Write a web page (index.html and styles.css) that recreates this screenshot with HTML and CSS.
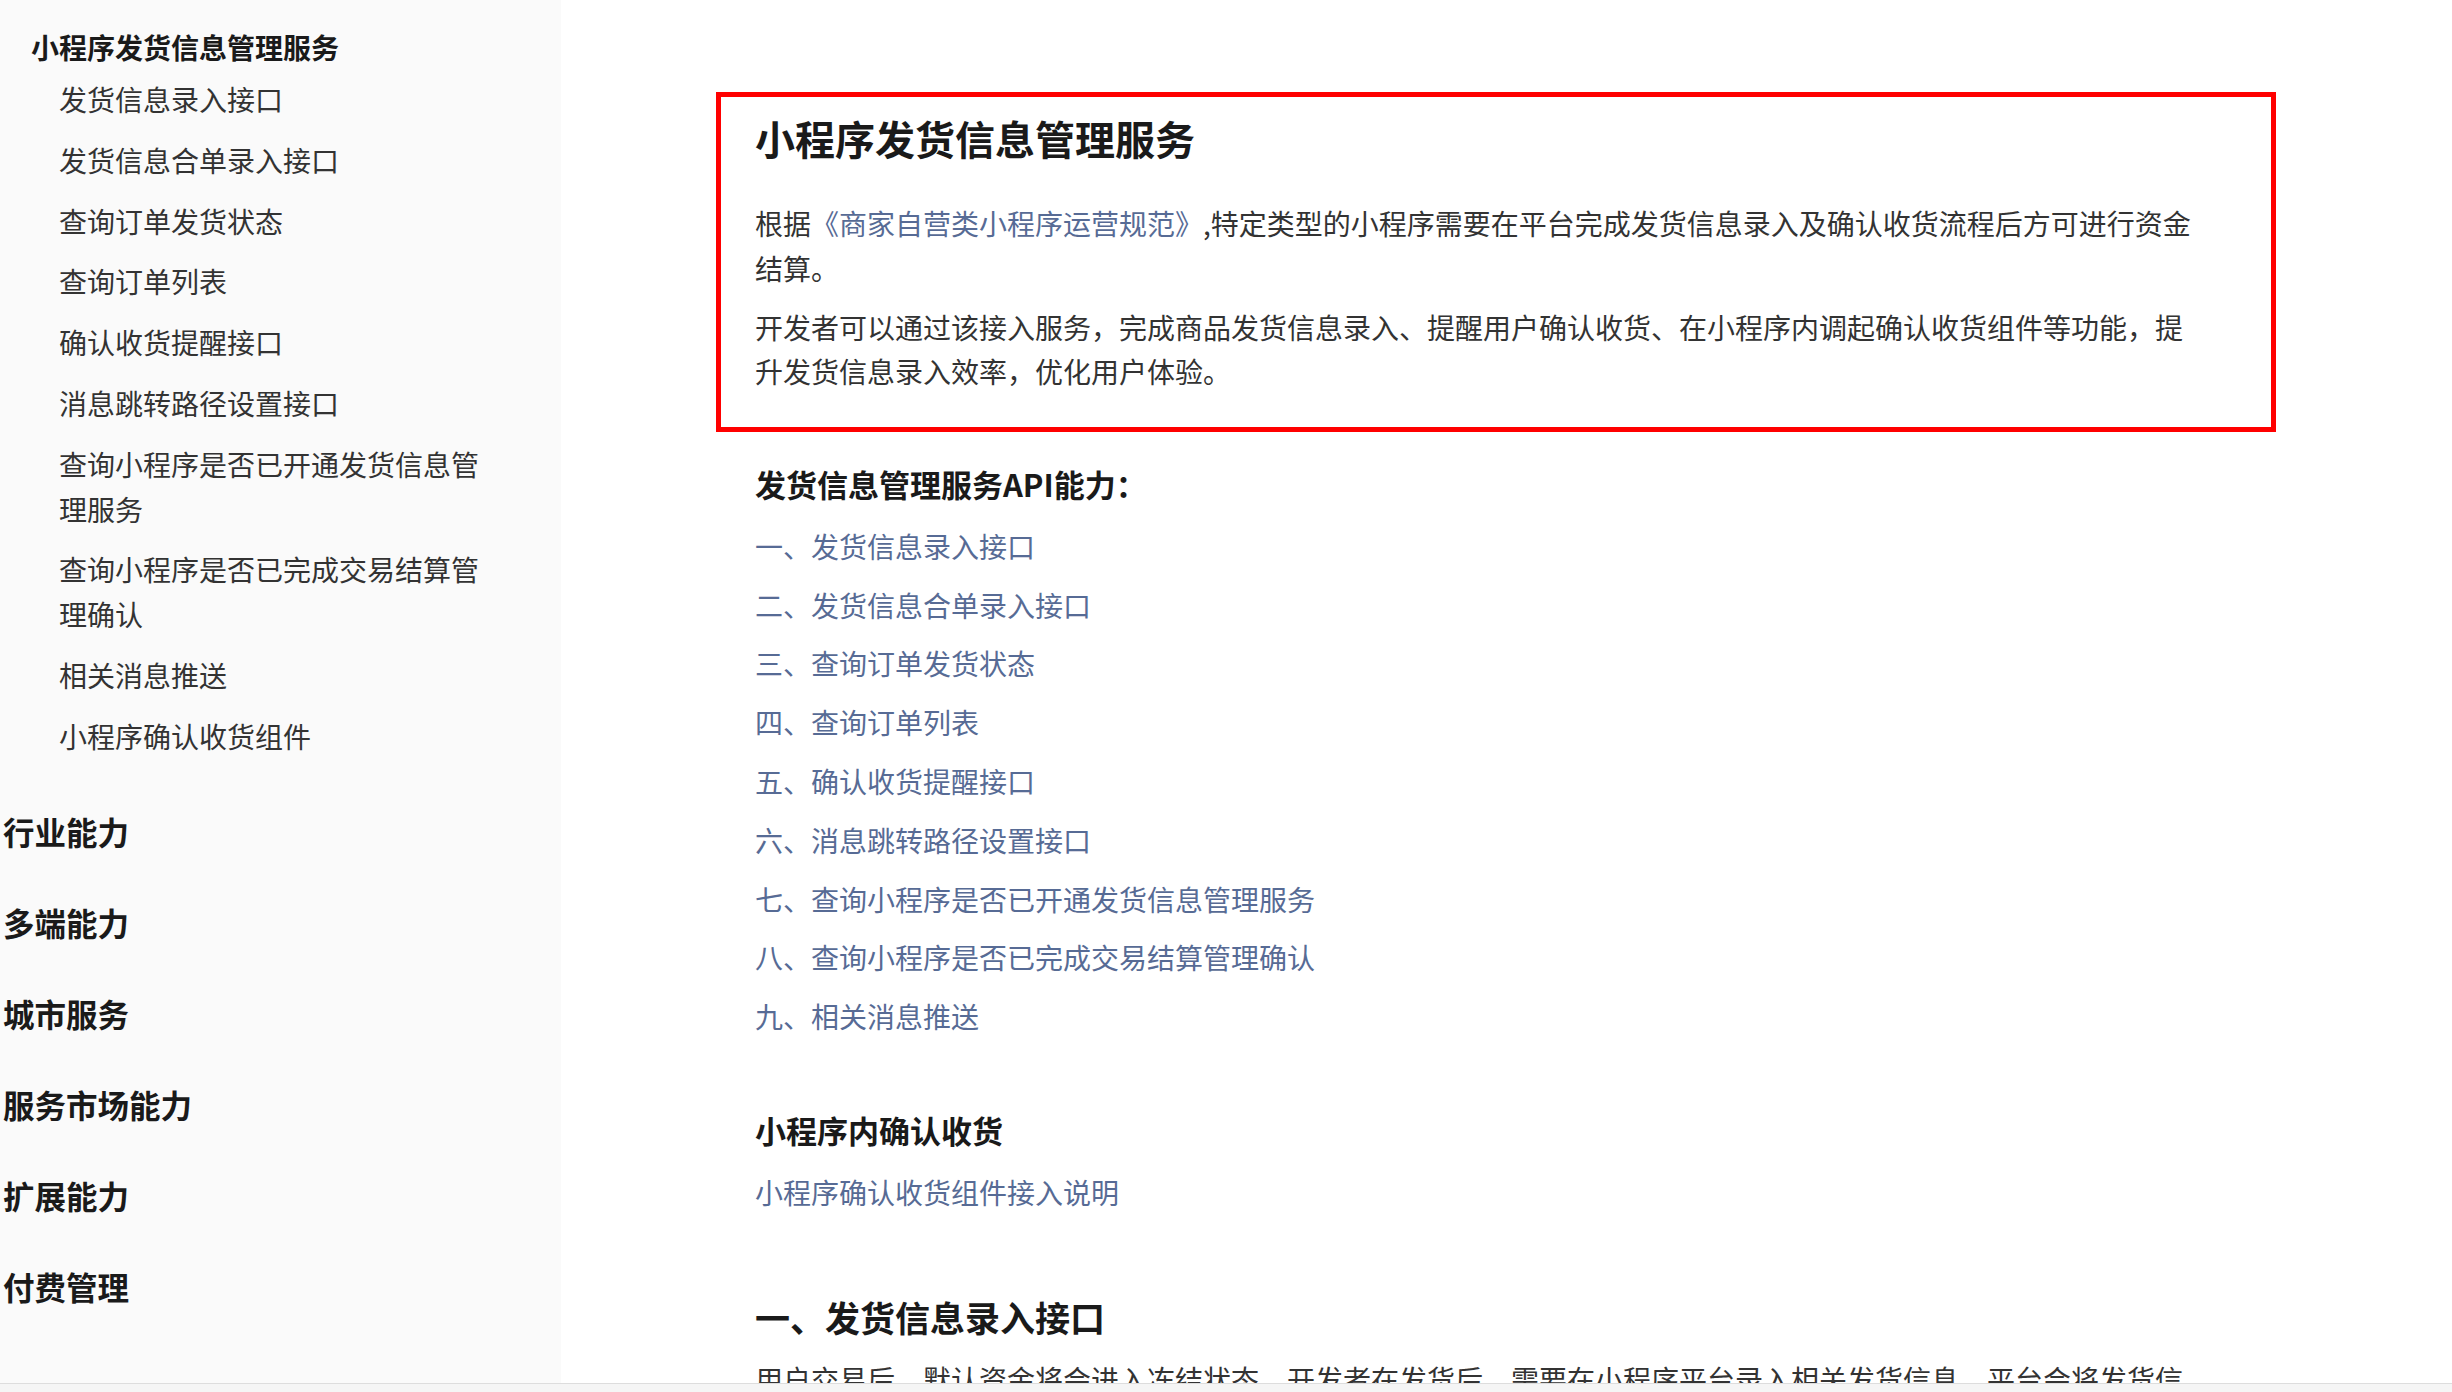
FILE: index.html
```html
<!DOCTYPE html>
<html>
<head>
    <meta charset="utf-8">
    <title>小程序发货信息管理服务</title>
    <link rel="stylesheet" href="styles.css">
</head>
<body>
    <div class="page">
        <div class="layout">
            <div class="sidebar">
                <div class="nav-title">小程序发货信息管理服务</div>
                <ul class="nav-list">
                    <li>发货信息录入接口</li>
                    <li>发货信息合单录入接口</li>
                    <li>查询订单发货状态</li>
                    <li>查询订单列表</li>
                    <li>确认收货提醒接口</li>
                    <li>消息跳转路径设置接口</li>
                    <li>查询小程序是否已开通发货信息管理服务</li>
                    <li>查询小程序是否已完成交易结算管理确认</li>
                    <li>相关消息推送</li>
                    <li>小程序确认收货组件</li>
                </ul>
                <div class="nav-group">行业能力</div>
                <div class="nav-group">多端能力</div>
                <div class="nav-group">城市服务</div>
                <div class="nav-group">服务市场能力</div>
                <div class="nav-group">扩展能力</div>
                <div class="nav-group">付费管理</div>
            </div>

            <div class="main">
                <div class="content">
                    <div class="highlight">
                        <h1>小程序发货信息管理服务</h1>
                        <p>根据<a href="#">《商家自营类小程序运营规范》</a>,特定类型的小程序需要在平台完成发货信息录入及确认收货流程后方可进行资金结算。</p>
                        <p>开发者可以通过该接入服务，完成商品发货信息录入、提醒用户确认收货、在小程序内调起确认收货组件等功能，提升发货信息录入效率，优化用户体验。</p>
                    </div>

                    <h3 class="first">发货信息管理服务API能力：</h3>
                    <p><a href="#">一、发货信息录入接口</a></p>
                    <p><a href="#">二、发货信息合单录入接口</a></p>
                    <p><a href="#">三、查询订单发货状态</a></p>
                    <p><a href="#">四、查询订单列表</a></p>
                    <p><a href="#">五、确认收货提醒接口</a></p>
                    <p><a href="#">六、消息跳转路径设置接口</a></p>
                    <p><a href="#">七、查询小程序是否已开通发货信息管理服务</a></p>
                    <p><a href="#">八、查询小程序是否已完成交易结算管理确认</a></p>
                    <p><a href="#">九、相关消息推送</a></p>

                    <h3>小程序内确认收货</h3>
                    <p><a href="#">小程序确认收货组件接入说明</a></p>

                    <h2>一、发货信息录入接口</h2>
                    <p>用户交易后，默认资金将会进入冻结状态，开发者在发货后，需要在小程序平台录入相关发货信息，平台会将发货信息以消息触达的形式推送给购买用户，待用户确认收货后，资金将会解冻并完成结算。</p>
                </div>
            </div>
        </div>
        <div class="bottom-bar"></div>
    </div>
</body>
</html>
```

FILE: styles.css
```css
html, body {
    margin: 0;
    height: 100%;
}
body {
    font-family: "Noto Sans CJK SC", "Noto Sans", sans-serif;
    color: #333;
    background-color: #fff;
}
.page {
    display: flex;
    flex-direction: column;
    height: 100vh;
}
.layout {
    flex: 1;
    min-height: 0;
    display: flex;
    overflow: hidden;
}

/* sidebar */
.sidebar {
    width: 561px;
    flex-shrink: 0;
    background-color: #fafafa;
    padding-top: 25px;
    box-sizing: border-box;
}
.nav-title {
    font-size: 28px;
    font-weight: bold;
    line-height: 44px;
    color: #1a1a1a;
    padding-left: 31px;
}
.nav-list {
    list-style: none;
    margin: 0 0 19px;
    padding: 0;
}
.nav-list li {
    font-size: 28px;
    line-height: 44.8px;
    padding: 8px 0;
    margin-left: 59px;
    width: 432px;
    color: #333;
}
.nav-group {
    font-size: 31.5px;
    font-weight: bold;
    line-height: 51px;
    padding: 20px 0 20px 3px;
    color: #1a1a1a;
}

/* main content */
.main {
    flex: 1;
    min-width: 0;
    padding: 92px 0 0 194px;
}
.content {
    width: 1450px;
}
.highlight {
    margin: 0 -71px 0 -39px;
    border: 5px solid #f00;
    padding: 13px 66px 19px 34px;
}
h1 {
    font-size: 40px;
    line-height: 56px;
    margin: 0 0 35px;
    color: #1a1a1a;
}
h2 {
    font-size: 35px;
    line-height: 49px;
    margin: 78px 0 16px;
    color: #1a1a1a;
}
h3 {
    font-size: 31px;
    line-height: 49.6px;
    margin: 66px 0 15px;
    color: #1a1a1a;
}
h3.first {
    margin-top: 27px;
}
p {
    font-size: 28px;
    line-height: 1.6;
    margin: 0 0 14px;
}
a {
    color: #576b95;
    text-decoration: none;
}

.bottom-bar {
    height: 8px;
    flex-shrink: 0;
    border-top: 1px solid #ddd;
    background-color: #f5f5f5;
}
```
